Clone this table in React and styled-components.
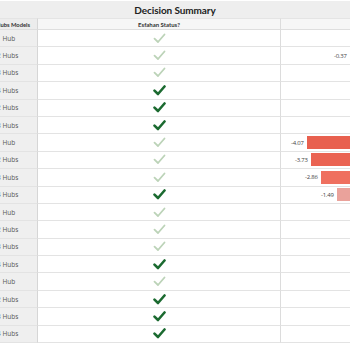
import React from "react";
import styled, { createGlobalStyle } from "styled-components";

const GlobalStyle = createGlobalStyle`
  html, body {
    margin: 0;
    padding: 0;
    background: #ffffff;
    overflow: hidden;
  }
  body {
    font-family: "Open Sans", "Liberation Sans", sans-serif;
  }
`;

const Page = styled.div`
  width: 350px;
  height: 350px;
  overflow: hidden;
  padding-top: 1px;
  box-sizing: border-box;
`;

const TitleBar = styled.div`
  height: 17px;
  background: #eeeeee;
  display: flex;
  align-items: center;
  justify-content: center;
  font-family: "Lato", "Open Sans", sans-serif;
  font-weight: 700;
  font-size: 10px;
  letter-spacing: -0.1px;
  color: #222222;
`;

const Table = styled.div`
  width: 355px;
  display: grid;
  grid-template-columns: 38px 243px 74px;
`;

const HeadCell = styled.div`
  height: 12px;
  box-sizing: border-box;
  background: ${(p) => (p.side ? "#ececec" : "#f6f6f6")};
  border-right: 1px solid ${(p) => (p.side ? "#d6d6d6" : "#dcdcdc")};
  border-bottom: 1px solid #dedede;
  border-top: 1px solid #e4e4e4;
  display: flex;
  align-items: center;
  justify-content: ${(p) => (p.side ? "flex-start" : "center")};
  overflow: hidden;
  white-space: nowrap;
  font-family: "Lato", "Open Sans", sans-serif;
  font-size: 6px;
  font-weight: 700;
  color: #333333;
`;

const Cell = styled.div`
  height: 17.4px;
  box-sizing: border-box;
  border-bottom: 1.5px solid #e3e3e3;
  border-right: 1px solid ${(p) => (p.side ? "#d6d6d6" : "#dcdcdc")};
  background: ${(p) => (p.side ? "#efefef" : "#ffffff")};
  display: flex;
  align-items: center;
  justify-content: ${(p) => p.align || "center"};
  overflow: hidden;
  white-space: nowrap;
`;

const SideText = styled.span`
  margin-left: ${(p) => p.shift || -3}px;
  font-size: 6.5px;
  color: #555555;
`;

const HeadSideText = styled.span`
  margin-left: -4px;
  font-size: 5.8px;
  font-weight: 700;
  color: #333333;
`;

const BarRow = styled.div`
  display: flex;
  align-items: center;
  justify-content: flex-end;
  gap: 3px;
  width: 100%;
  height: 100%;
  padding: 1.7px 0;
  box-sizing: border-box;
`;

const Value = styled.span`
  font-size: 6px;
  color: #444444;
  letter-spacing: -0.2px;
`;

const Bar = styled.div`
  height: 100%;
  background: ${(p) => p.color};
  flex-shrink: 0;
`;

const Check = ({ dark }) => (
  <svg width="13" height="11" viewBox="0 0 13 11">
    <path
      d="M1.5 5.6 L5 9 L11.5 1.5"
      fill="none"
      stroke={dark ? "#1b6a30" : "#bcd3b8"}
      strokeWidth={dark ? 2.6 : 1.8}
      strokeLinecap="round"
      strokeLinejoin="round"
    />
  </svg>
);

const rows = [
  { label: "1 Hub", dark: false },
  { label: "2 Hubs", dark: false, value: -0.37 },
  { label: "3 Hubs", dark: false },
  { label: "4 Hubs", dark: true },
  { label: "2 Hubs", dark: true },
  { label: "3 Hubs", dark: true },
  { label: "1 Hub", dark: false, value: -4.07, color: "#e8604f" },
  { label: "2 Hubs", dark: false, value: -3.73, color: "#ea6352" },
  { label: "3 Hubs", dark: false, value: -2.86, color: "#ef705f" },
  { label: "4 Hubs", dark: true, value: -1.49, color: "#eaa29b" },
  { label: "1 Hub", dark: false },
  { label: "2 Hubs", dark: false },
  { label: "3 Hubs", dark: false },
  { label: "4 Hubs", dark: true },
  { label: "1 Hub", dark: false },
  { label: "2 Hubs", dark: true },
  { label: "3 Hubs", dark: true },
  { label: "4 Hubs", dark: true },
];

const SCALE = 11.6;

export default function App() {
  return (
    <Page>
      <GlobalStyle />
      <TitleBar>Decision Summary</TitleBar>
      <Table>
        <HeadCell side>
          <HeadSideText>Hubs Models</HeadSideText>
        </HeadCell>
        <HeadCell>Esfahan Status?</HeadCell>
        <HeadCell />
        {rows.map((r, i) => (
          <React.Fragment key={i}>
            <Cell side align="flex-start">
              <SideText>{r.label}</SideText>
            </Cell>
            <Cell>
              <Check dark={r.dark} />
            </Cell>
            <Cell align="flex-end">
              {r.value !== undefined && (
                <BarRow>
                  <Value>{r.value.toFixed(2)}</Value>
                  <Bar
                    color={r.color || "#eaa29b"}
                    style={{ width: `${Math.abs(r.value) * SCALE}px` }}
                  />
                </BarRow>
              )}
            </Cell>
          </React.Fragment>
        ))}
      </Table>
    </Page>
  );
}
